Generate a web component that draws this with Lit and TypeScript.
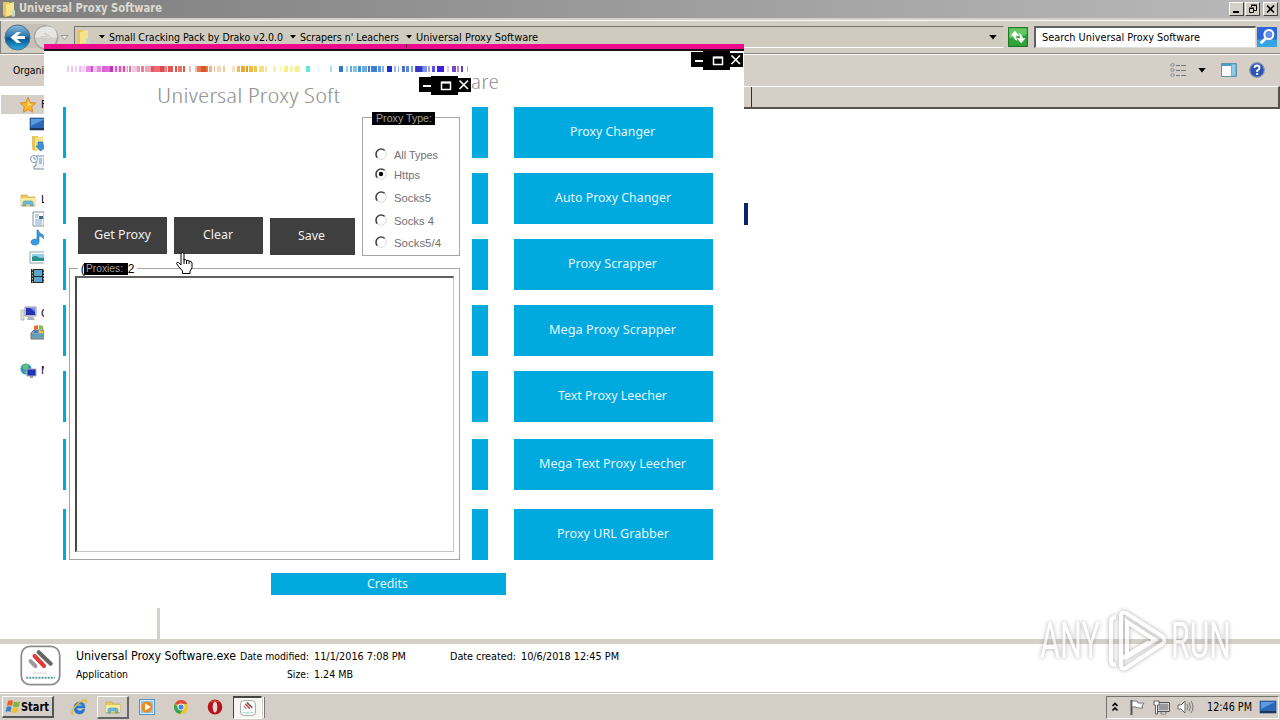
import { LitElement, css, html, svg } from "lit";
import { customElement, property } from "lit/decorators.js";

// Start, width, colour of every stripe in the rainbow strip.
const STRIPES: [number, number, string][] = [
  [1, 2, "#f3c8f5"], [5, 2, "#ecc3ef"], [9, 2, "#f3cdf5"], [13, 2, "#e9b5ee"],
  [15, 4, "#f6d4f7"], [20, 5, "#ec8ae8"], [25, 2, "#b95bc9"], [27, 4, "#f3c0f0"],
  [31, 4, "#e28add"], [36, 3, "#dd5fd0"], [39, 5, "#e26ad8"], [44, 3, "#b33db0"],
  [47, 2, "#f6d0ee"], [49, 2, "#d765bd"], [51, 2, "#f6d0ea"], [53, 2, "#cf5cae"],
  [55, 2, "#f4c8e4"], [57, 2, "#d3519f"], [59, 2, "#f8d8ec"], [61, 1, "#e59bc6"],
  [63, 2, "#cf77a8"], [66, 5, "#f8c6df"], [71, 3, "#ee98ba"], [75, 3, "#e87c9e"],
  [79, 6, "#f3a3b3"], [85, 3, "#dc5868"], [88, 6, "#f06a72"], [94, 4, "#d84b53"],
  [98, 3, "#ef7f80"], [102, 5, "#e55555"], [109, 2, "#da574f"], [112, 4, "#ea7468"],
  [117, 2, "#c9604c"], [123, 2, "#f0b9ba"], [129, 2, "#eec0ac"], [131, 4, "#e97850"],
  [135, 5, "#d9552c"], [140, 2, "#ef7a42"], [143, 3, "#efb28c"], [148, 1, "#eec49c"],
  [151, 4, "#f8d8b4"], [157, 2, "#efcb9e"], [166, 3, "#fae3b4"], [171, 3, "#e9bd5c"],
  [175, 4, "#e8aa30"], [180, 2, "#d9a230"], [183, 4, "#efba3a"], [188, 3, "#e9c850"],
  [193, 5, "#f6df80"], [199, 2, "#f8e89c"], [207, 3, "#faf3ae"], [214, 2, "#fbf7bd"],
  [218, 4, "#f5f08a"], [224, 3, "#faf6a0"], [229, 5, "#f6f28a"], [240, 4, "#60e9e0"],
  [252, 1, "#d2f2f8"], [264, 2, "#a5ddf4"], [273, 4, "#2e78c4"], [280, 2, "#a4d2f2"],
  [284, 2, "#62aee2"], [287, 4, "#83c0ea"], [292, 3, "#4692d4"], [296, 5, "#6cace4"],
  [302, 2, "#3a78c8"], [305, 6, "#3f7ed8"], [312, 3, "#5a94e4"], [316, 2, "#88b0ec"],
  [321, 5, "#1b2ed0"], [328, 2, "#a2bcf2"], [332, 1, "#93b0ee"], [336, 3, "#4a72c0"],
  [340, 3, "#5a88da"], [345, 2, "#80a2e6"], [349, 3, "#4a4ccc"], [351, 6, "#4a78cc"],
  [362, 2, "#a0a4f0"], [350, 6, "#3a34c8"], [357, 4, "#8c8cf0"], [366, 3, "#5850e6"],
  [371, 7, "#3c22dc"], [381, 2, "#dccaf6"], [386, 4, "#7848c4"], [391, 2, "#b58ae0"],
  [395, 2, "#6a3cb4"], [401, 1, "#c9a4dc"],
];

const ROWS: [number, string, number][] = [
  [15, "Proxy Changer", 85], [15, "Auto Proxy Changer", 116], [15, "Proxy Scrapper", 89],
  [15, "Mega Proxy Scrapper", 127], [17, "Text Proxy Leecher", 109],
  [19, "Mega Text Proxy Leecher", 147], [0, "Proxy URL Grabber", 112],
];

const folder = svg`
  <path d="M2 1h6l1 2v12l-5 1-2-2z" fill="#e6c65c"/>
  <path d="M5 3l8-2v13l-8 1z" fill="#f7e38c"/>
  <path d="M11 9h3v6l-3 1z" fill="#c9d6c0"/>`;
const arrow = svg`<path d="M0 0h6L3 3.5z" fill="#000"/>`;
const explorer = svg`
  <path d="M1 3h6l1 2h7v9H1z" fill="#e8c95c" stroke="#c39d35" stroke-width=".6"/>
  <path d="M1 6h14v7H1z" fill="#fbeb9c"/>
  <path d="M3 14v-3q0-2 2-2h6q2 0 2 2v3h-2.500v-2h-5v2z" fill="#6db8dd" stroke="#4790ba" stroke-width=".6"/>`;

const icons: Record<string, unknown> = {
  folder,
  explorer,
  star: svg`<path d="M8 .5l2.300 5 5.400.6-4 3.700 1.100 5.400L8 12.500l-4.800 2.700 1.100-5.400-4-3.700 5.400-.6z" fill="#ffb52c" stroke="#d97a18" stroke-width=".8"/><path d="M8 3l1.500 4h3L8 9z" fill="#ffe27a"/>`,
  desktop: svg`<rect x="0" y="2" width="16" height="12" fill="#2b68b8" stroke="#244a80" stroke-width=".6"/><path d="M1 3h14L1 10z" fill="#5b9be0"/><path d="M0 12h16v2H0z" fill="#1d3558"/>`,
  downloads: svg`${folder}<path d="M8 7h5v4h3l-5.500 5L6 11h2z" fill="#3d94d8" stroke="#236aa8" stroke-width=".6"/>`,
  recent: svg`<path d="M6 2h10v2h-2v8h2v3H4v-3h2z" fill="#eef3f8" stroke="#7f8d9c"/><circle cx="4" cy="5" r="3.500" fill="#fff" stroke="#8296aa"/><path d="M4 3v2h2M9 5h3M9 7h3M9 9h3" stroke="#6b8fb5" fill="none"/>`,
  doc: svg`<path d="M3 1h11v14H3z" fill="#fff" stroke="#8090a4"/><path d="M5 4h4M5 6h3M5 9h7M5 11h7M5 13h7" stroke="#7aa0c8"/><path d="M9 5h4v3H9z" fill="#3e668e"/>`,
  music: svg`<path d="M8 0q1 3 5 5l1 4q-2-3-5-3v6a4 3 0 1 1-2-2.500V0z" fill="#3a9ce0" stroke="#1c6cae" stroke-width=".6"/>`,
  pictures: svg`<path d="M0 3h16v11H0z" fill="#fff" stroke="#8ba0b0"/><path d="M2 5h14v4H2z" fill="#8fd0f0"/><path d="M2 8q4-2 6 0t8 0v4H2z" fill="#2b8d8a"/>`,
  videos: svg`<path d="M1 1h14v14H1z" fill="#222a30"/><path d="M4 2h8v6H4zM4 9h8v5H4z" fill="#59a6d0"/><path d="M2.500 1v15M13.500 1v15" stroke="#d6b06c" stroke-dasharray="1.500 1.500"/>`,
  computer: svg`<path d="M5 1h11v9H5z" fill="#d8dce4" stroke="#8a90a0"/><path d="M6 2h9v7H6z" fill="#2532b4"/><path d="M10 2h5v4z" fill="#6c8af0"/><path d="M8 11h5l2 3H7z" fill="#aab0bc"/><path d="M1 4h3v10H1z" fill="#dce8d8" stroke="#91a091" stroke-width=".6"/>`,
  drive: svg`<path d="M1 8l3-3h9l3 3v6H1z" fill="#8ca0ac" stroke="#5d7280"/><path d="M2 9h13v3H2z" fill="#5e9fb8"/><path d="M4 1l4-1v4l-4 1z" fill="#ee6a30"/><path d="M9 0l4 1v4L9 4z" fill="#87bc3c"/><path d="M4 6l4-1v3H4z" fill="#3f80d0"/><path d="M9 5l4 1v2H9z" fill="#f5c530"/>`,
  network: svg`<circle cx="6" cy="6" r="5.500" fill="#2f8fcc"/><path d="M2 4q4-5 7-2L7 6 4 7zM3 9l3-1 1 3z" fill="#67c26c"/><path d="M7 6h9v7H7z" fill="#1e34b0" stroke="#a8b0bc"/><path d="M10 13h3v2h-3z" fill="#8f98a4"/>`,
  ie: svg`<path d="M14 9H5.500q.5 3 3.500 3 1.500 0 2.500-1.500h2.300Q12.500 15 8.500 15 3 14.500 3 9t5.500-6Q14 3 14 9zM5.500 7h6Q11 5 8.500 5T5.500 7z" fill="#2478cc" stroke="#2478cc" stroke-width=".7" fill-rule="evenodd"/><path d="M3 15q-4 0 0-6Q8 2 14 1q3 0 0 4" fill="none" stroke="#e8b92c" stroke-width="1.300"/>`,
  media: svg`<rect x=".5" y=".5" width="15" height="15" fill="#d9edf9" stroke="#5293c5"/><rect x="2" y="2" width="12" height="12" fill="#8cc1e8"/><circle cx="8" cy="8" r="5.500" fill="#f08a1c"/><path d="M6 4.500L12 8l-6 3.500z" fill="#fff"/>`,
  chrome: svg`<circle cx="8" cy="8" r="7" fill="#f2c522"/><path d="M8 8L2 4.400A7 7 0 0 1 14.300 5H8z" fill="#dd4b3c"/><path d="M2 4.400A7 7 0 0 0 7 15L10.500 10 8 8 5 9z" fill="#38a252"/><circle cx="8" cy="8" r="3.400" fill="#fff"/><circle cx="8" cy="8" r="2.600" fill="#4284e0"/>`,
  opera: svg`<ellipse cx="8" cy="8" rx="7.300" ry="7.500" fill="#b8131a"/><path d="M3 3q5-3 9 0" stroke="#e0504a" fill="none"/><ellipse cx="8" cy="8" rx="2.300" ry="5.500" fill="#e4d8d2"/>`,
  app: svg`<rect x=".5" y=".5" width="15" height="15" rx="3.500" fill="#fff" stroke="#8d8d8d" stroke-width=".7"/><path d="M7.300 2.800l4.700 4.500" stroke="#666" stroke-width="1.600" stroke-linecap="round"/><path d="M5.700 4.300l3.700 3.900" stroke="#e13a38" stroke-width="1.600" stroke-linecap="round"/><path d="M4.100 6.300l1.900 1.900" stroke="#9b9b9b" stroke-width="1.600" stroke-linecap="round"/><path d="M5.500 11h5" stroke="#ccc" stroke-width=".5" stroke-dasharray=".7 .4"/><path d="M2.400 12.800h11.200" stroke="#5d9f9c" stroke-width=".8" stroke-dasharray=".8 .4"/>`,
  start: svg`<path d="M3 2q3-1.500 5 0L7 7Q4.500 5.500 2 7z" fill="#e8602c"/><path d="M9 2.500q3 1.500 6 0L14 7.500q-3 1.500-6 0z" fill="#7cb840"/><path d="M1.600 8q2.500-1.500 5 0L5.500 13q-2.500-1.500-5 0z" fill="#3b82cc"/><path d="M7.600 8.500q3 1.500 6 0L12.500 13q-3 1.500-6 0z" fill="#f4bd2c"/>`,
  refresh: svg`<rect x=".5" y=".5" width="15" height="15" fill="#2fa53a" stroke="#1d7b2a"/><path d="M1 1h14v5L1 9z" fill="#63c864"/><path d="M7.500 11Q4.500 10 4.200 7H2l3.500-4L9 7H6.500q0 2 1 4zM8.500 5q3 1 3.300 4H14l-3.500 4L7 9h2.500q0-2-1-4z" fill="#fff"/>`,
  search: svg`<path d="M0 0h16v16H0z" fill="#2c66d8"/><path d="M0 10h16v6H0z" fill="#36a4e6"/><circle cx="9.500" cy="6" r="3.600" fill="#5c90ec" stroke="#fff" stroke-width="1.600"/><path d="M7 9l-4 4" stroke="#fff" stroke-width="2.200"/>`,
  list: svg`<path d="M1 2h3v2H1zM1 7h3v2H1zM1 12h3v2H1z" fill="#fff" stroke="#6c7784" stroke-width=".8"/><path d="M6 3.500h4M11 3.500h5M6 8.500h4M11 8.500h5M6 13.500h4M11 13.500h5" stroke="#70777e"/>`,
  pane: svg`<path d="M.5 1.500h15v13H.5z" fill="#fff" stroke="#5e95ad"/><path d="M1 2h9v2H1z" fill="#4d9cc3"/><path d="M10.500 2h4v12h-4z" fill="#8fcde6" stroke="#5e95ad" stroke-width=".7"/>`,
  help: svg`<circle cx="8" cy="8" r="7.300" fill="#2d55b8" stroke="#8895ac" stroke-width="1.200"/><path d="M5.500 6Q5.500 3.500 8 3.500T10.500 6Q10.500 7.500 8.200 8.500V10" fill="none" stroke="#fff" stroke-width="1.900"/><path d="M7.200 11h2v2h-2z" fill="#fff"/>`,
  chevrons: svg`<path d="M5.500 7L8 4.500 10.500 7M5.500 11.500L8 9l2.500 2.500" fill="none" stroke="#000" stroke-width="1.600"/>`,
  flag: svg`<path d="M2.500 1v15" stroke="#555" stroke-width="2"/><path d="M3 2h5l1 2h6l-2 3 1 2H8L7 8H3z" fill="#fff" stroke="#777"/>`,
  lan: svg`<path d="M5 4h11v8H5z" fill="#999" stroke="#fff"/><path d="M4.500 3.500h12v9h-12z" fill="none" stroke="#555"/><path d="M8 13h5v2H8z" fill="#fff" stroke="#555" stroke-width=".7"/><path d="M1 2h5v4H4.500v9h-2V6H1z" fill="#fff" stroke="#444" stroke-width=".8"/>`,
  speaker: svg`<path d="M1 6h3l4-4v12l-4-4H1z" fill="#fff" stroke="#666"/><path d="M10 5q2 3 0 6M12 3.500q3 4.500 0 9M14 2q4 6 0 12" fill="none" stroke="#777"/>`,
};

@customElement("ui-icon")
export class UiIcon extends LitElement {
  @property({ type: String })
  name = "";

  render() {
    return html`<svg viewBox="0 0 16 16">${icons[this.name]}</svg>`;
  }

  static styles = css`
    :host {
      display: block;
      flex: none;
      width: 16px;
      height: 16px;
    }

    svg {
      display: block;
      width: 100%;
      height: 100%;
      overflow: visible;
    }
  `;
}

@customElement("fit-text")
export class FitText extends LitElement {
  @property({ type: String })
  text = "";

  @property({ type: Number })
  width = 0;

  @property({ type: Number })
  size = 11;

  render() {
    return html`<svg width=${this.width} height=${this.size}>
      <text y=${Math.round(this.size * 0.9) - 1} font-size=${this.size} textLength=${this.width} lengthAdjust="spacingAndGlyphs">${this.text}</text>
    </svg>`;
  }

  static styles = css`
    :host {
      display: block;
      flex: none;
    }

    svg {
      display: block;
      overflow: visible;
      fill: currentColor;
    }
  `;
}

@customElement("window-controls")
export class WindowControls extends LitElement {
  render() {
    return html`<svg width="52" height="20" viewBox="0 0 52 20">
      <path d="M0 1h12V0h27v2h13v14H39v3H12v-3H0z" fill="#000" />
      <path d="M4 10h8" stroke="#fff" stroke-width="2" />
      <path d="M22.500 6.500h9v7h-9z" fill="none" stroke="#fff" stroke-width="1.500" />
      <path d="M22 6.500h10" stroke="#fff" stroke-width="2" />
      <path d="M40.500 4.500l8.500 8.500M49 4.500l-8.500 8.500" stroke="#fff" stroke-width="1.600" />
    </svg>`;
  }

  static styles = css`
    :host,
    svg {
      display: block;
    }
  `;
}

@customElement("explorer-window")
export class ExplorerWindow extends LitElement {
  places: [string, string][] = [
    ["star", "F"], ["desktop", ""], ["downloads", ""], ["recent", ""], ["", ""],
    ["explorer", "L"], ["doc", ""], ["music", ""], ["pictures", ""], ["videos", ""], ["", ""],
    ["computer", "C"], ["drive", ""], ["", ""], ["network", "N"],
  ];

  crumb(text: string, width: number) {
    return html`<svg class="arrow" viewBox="0 0 6 4">${arrow}</svg>
      <fit-text .text=${text} .width=${width}></fit-text>`;
  }

  render() {
    return html`
      <div class="title">
        <ui-icon name="folder"></ui-icon>
        <fit-text class="bold" text="Universal Proxy Software" width="143" size="11.500"></fit-text>
        <div class="buttons">
          <div class="btn"><svg viewBox="0 0 13 12"><path d="M3 9h6" stroke="#000" stroke-width="2" /></svg></div>
          <div class="btn"><svg viewBox="0 0 13 12"><path d="M5.500 4V2.500h5v5H8M3.500 5.500h4v4h-4zM3 5h5M5 2h6" fill="none" stroke="#000" /></svg></div>
          <div class="btn last"><svg viewBox="0 0 13 12"><path d="M3 2.500l7 7M10 2.500l-7 7" stroke="#000" stroke-width="1.700" /></svg></div>
        </div>
      </div>
      <div class="nav">
        <svg class="travel" width="70" height="32" viewBox="0 0 70 32">
          <defs>
            <linearGradient id="ball" x2="0" y2="1">
              <stop offset="0" stop-color="#8abbdc" />
              <stop offset=".48" stop-color="#2673ad" />
              <stop offset=".52" stop-color="#074f91" />
              <stop offset="1" stop-color="#2cb2e4" />
            </linearGradient>
          </defs>
          <path d="M17 3h29v24H17z" fill="#c5c1b8" />
          <circle cx="17.500" cy="16.500" r="12.500" fill="url(#ball)" stroke="#536c81" />
          <path d="M25 15h-8l4-4h-4l-6.500 5.500L17 22h4l-4-4h8z" fill="#fff" />
          <circle cx="46" cy="16.500" r="11.500" fill="#d3d1cb" stroke="#a5a39c" stroke-width="1.500" />
          <path d="M35 16.500q0-10 11-11t11 11z" fill="#e8e6e1" />
          <path d="M41 15.500h6l-3-3h2l5 4-5 4h-2l3-3h-6z" fill="#dedcd6" stroke="#c1bfb9" stroke-width=".6" />
          <path d="M61 14.500h7l-3.500 4z" fill="#eee" stroke="#888" stroke-width=".8" />
        </svg>
        <div class="address">
          <ui-icon name="folder"></ui-icon>
          ${this.crumb("Small Cracking Pack by Drako v2.0.0", 174)}
          ${this.crumb("Scrapers n' Leachers", 99)}
          ${this.crumb("Universal Proxy Software", 122)}
          <svg class="arrow drop" viewBox="0 0 6 4">${arrow}</svg>
        </div>
        <ui-icon class="refresh" name="refresh"></ui-icon>
        <div class="search"><fit-text text="Search Universal Proxy Software" width="158"></fit-text></div>
        <ui-icon class="go" name="search"></ui-icon>
      </div>
      <div class="tools">
        <fit-text text="Organi" width="31"></fit-text>
        <ui-icon class="views" name="list"></ui-icon>
        <svg class="arrow big" viewBox="0 0 6 4">${arrow}</svg>
        <ui-icon name="pane"></ui-icon>
        <ui-icon class="help" name="help"></ui-icon>
      </div>
      <div class="main">
        <div class="side">
          ${this.places.map(
            ([icon, letter], i) => html`<div class="place ${i === 0 ? "on" : ""} ${letter ? "" : "sub"}">
              ${icon ? html`<ui-icon name=${icon}></ui-icon>` : ""}<span>${letter}</span>
            </div>`
          )}
        </div>
        <div class="files">
          <div class="header"><div class="column"></div></div>
          <div class="selection"></div>
        </div>
      </div>
      <div class="details">
        <ui-icon name="app"></ui-icon>
        <div class="facts">
          <div class="line">
            <fit-text text="Universal Proxy Software.exe" width="160" size="12"></fit-text>
            <fit-text class="key" text="Date modified:" width="69"></fit-text>
            <fit-text text="11/1/2016 7:08 PM" width="92"></fit-text>
            <fit-text class="created" text="Date created:" width="66"></fit-text>
            <fit-text text="10/6/2018 12:45 PM" width="98"></fit-text>
          </div>
          <div class="line">
            <fit-text text="Application" width="52"></fit-text>
            <fit-text class="size" text="Size:" width="22"></fit-text>
            <fit-text text="1.24 MB" width="39"></fit-text>
          </div>
        </div>
      </div>
    `;
  }

  static styles = css`
    :host {
      display: flex;
      flex-direction: column;
      height: 693px;
      background: #fff;
    }

    .title {
      display: flex;
      align-items: center;
      height: 18px;
      gap: 2px;
      padding: 0 2px 0 1px;
      color: #dedbd3;
      background: linear-gradient(90deg, #7e7e7e, #b9b9b9);
    }

    .bold {
      font-weight: bold;
    }

    .buttons {
      display: flex;
      margin-left: auto;
    }

    .btn {
      width: 13px;
      height: 12px;
      border: 1px solid #fff;
      border-right-color: #404040;
      border-bottom-color: #404040;
      background: #d4d0c8;
      margin-left: 1px;
    }

    .btn svg {
      display: block;
    }

    .last {
      margin-left: 3px;
    }

    .nav {
      display: flex;
      align-items: center;
      box-sizing: border-box;
      height: 37px;
      padding-right: 2px;
      background: #d2cec4;
      border-top: 2px solid #d4d0c8;
      border-bottom: 1px solid #fff;
      box-shadow: inset 0 1px #f8f8f8, inset 0 -1px #8a867e, inset 1px 0 #808080;
    }

    .travel {
      margin-right: 4px;
    }

    .address {
      display: flex;
      align-items: center;
      box-sizing: border-box;
      width: 930px;
      height: 22px;
      background: #cfccbf;
      border: 1px solid #77746c;
      border-right-color: #d4d0c8;
      border-bottom-color: #fff;
    }

    .address ui-icon {
      margin-right: 6px;
    }

    .arrow {
      width: 6px;
      height: 4px;
      margin: 0 4px 0 7px;
    }

    .address .arrow:first-of-type {
      margin-left: 2px;
    }

    .address .drop {
      width: 8px;
      height: 5px;
      margin: 0 6px 0 auto;
    }

    .refresh,
    .go {
      width: 20px;
      height: 20px;
    }

    .refresh {
      margin: 0 6px 0 4px;
    }

    .search {
      display: flex;
      align-items: center;
      box-sizing: border-box;
      width: 222px;
      height: 22px;
      padding-left: 6px;
      background: #fff;
      border: 2px solid #606060;
      border-right: 1px solid #ddd;
      border-bottom: 1px solid #ddd;
      margin-right: 1px;
    }

    .tools {
      display: flex;
      align-items: center;
      height: 31px;
      padding: 0 15px 0 13px;
      background: #d5cfc7;
    }

    .views {
      margin-left: auto;
    }

    .tools ui-icon {
      margin-top: -1px;
    }

    .arrow.big {
      width: 8px;
      height: 5px;
      margin: 0 15px 0 12px;
    }

    .help {
      margin-left: 12px;
    }

    .main {
      display: flex;
      flex: 1;
      min-height: 0;
    }

    .side {
      box-sizing: border-box;
      width: 160px;
      padding-top: 9px;
      border-right: 3px solid #d4d0c8;
    }

    .place {
      display: flex;
      align-items: center;
      box-sizing: border-box;
      height: 19px;
      padding-left: 19px;
      gap: 5px;
      margin-left: 1px;
      font-size: 11px;
    }

    .on {
      background: #d4d0c8;
    }

    .sub {
      padding-left: 29px;
    }

    .files {
      flex: 1;
    }

    .header {
      box-sizing: border-box;
      height: 23px;
      background: #d5cfc7;
      border: 1px solid #fff;
      border-bottom: 2px solid #55524d;
      border-right: 2px solid #55524d;
    }

    .column {
      box-sizing: border-box;
      width: 591px;
      height: 100%;
      border-right: 1px solid #303030;
    }

    .selection {
      width: 588px;
      height: 22px;
      margin-top: 94px;
      background: #0a246a;
    }

    .details {
      display: flex;
      box-sizing: border-box;
      height: 54px;
      padding-left: 20px;
      border-top: 5px solid #d4d0c8;
      border-bottom: 1px solid #c4c0b8;
    }

    .details ui-icon {
      width: 41px;
      height: 41px;
      margin-top: 1px;
    }

    .facts {
      display: flex;
      flex-direction: column;
      gap: 6px;
      padding: 6px 0 0 15px;
    }

    .line {
      display: flex;
      align-items: center;
      height: 12px;
      gap: 5px;
    }

    .key {
      margin-left: -1px;
    }

    .created {
      margin-left: 39px;
    }

    .size {
      margin-left: 154px;
    }
  `;
}

@customElement("software-window")
export class SoftwareWindow extends LitElement {
  render() {
    return html`
      <div class="accent"><div class="tick"></div></div>
      <window-controls></window-controls>
      <fit-text class="heading" text="are" width="28" size="21"></fit-text>
      <div class="grid">
        ${ROWS.map(
          ([gap, text, width]) => html`<div class="row" style="margin-bottom: ${gap}px">
            <div class="tile"></div>
            <div class="tile"></div>
            <div class="tile"><fit-text .text=${text} .width=${width} .size=${13}></fit-text></div>
          </div>`
        )}
      </div>
      <div class="credits"><fit-text text="Credits" width="41" size="13"></fit-text></div>
    `;
  }

  static styles = css`
    :host {
      display: flex;
      flex-direction: column;
      background: #fff;
      font-family: "Noto Sans", sans-serif;
    }

    .accent {
      box-sizing: border-box;
      height: 7px;
      background: #ec0b8c;
      border-bottom: 2px solid #1c1016;
    }

    .tick {
      width: 1px;
      height: 4px;
      margin-left: 362px;
      background: #6a0a44;
    }

    window-controls {
      align-self: flex-end;
      margin-right: 1px;
    }

    .heading {
      margin: 0 0 0 427px;
      color: #959595;
      font-family: "Open Sans", sans-serif;
      font-weight: 300;
    }

    .grid {
      margin: 15px 0 0 19px;
    }

    .row {
      display: grid;
      grid-template-columns: 199px 199px 199px;
      column-gap: 26.500px;
    }

    .tile {
      display: flex;
      align-items: center;
      justify-content: center;
      box-sizing: border-box;
      height: 51px;
      padding: 0 2px 3px 0;
      color: #e4f7ff;
      background: #00a9de;
    }

    .credits {
      display: flex;
      align-items: center;
      justify-content: center;
      box-sizing: border-box;
      width: 235px;
      height: 22px;
      margin: 13px 0 0 227px;
      padding: 0 2px 2px 0;
      color: #e4f7ff;
      background: #00a9de;
    }
  `;
}

@customElement("proxy-window")
export class ProxyWindow extends LitElement {
  types: [string, number, number][] = [
    ["All Types", 44, 20], ["Https", 26, 20], ["Socks5", 37, 26], ["Socks 4", 40, 20], ["Socks5/4", 47, 24],
  ];

  render() {
    return html`
      <svg class="rainbow" width="406" height="6">
        ${STRIPES.map(([x, w, c]) => svg`<rect x=${x} width=${w} height="6" fill=${c} />`)}
      </svg>
      <div class="top">
        <fit-text text="Universal Proxy Soft" width="183" size="21"></fit-text>
        <window-controls></window-controls>
      </div>
      <div class="middle">
        <div class="actions">
          <div class="action"><fit-text text="Get Proxy" width="57" size="13"></fit-text></div>
          <div class="action"><fit-text text="Clear" width="30" size="13"></fit-text></div>
          <div class="action save"><fit-text text="Save" width="27" size="13"></fit-text></div>
        </div>
        <div class="types">
          <div class="legend"><fit-text text="Proxy Type:" width="56"></fit-text></div>
          ${this.types.map(
            ([text, width, height]) => html`<div class="type" style="height: ${height}px">
              <svg width="12" height="12" viewBox="0 0 12 12">
                <path d="M2.500 9.800A5 5 0 1 1 9.800 2.500" fill="none" stroke="#444" stroke-width="1.600" />
                <path d="M2.500 9.800A5 5 0 0 0 9.800 2.500" fill="none" stroke="#d8d8d8" />
                ${text === "Https" ? svg`<circle cx="6" cy="6" r="2.200" />` : ""}
              </svg>
              <fit-text .text=${text} .width=${width}></fit-text>
            </div>`
          )}
        </div>
      </div>
      <div class="output">
        <div class="caption">
          <span>(</span>
          <div class="badge"><fit-text text="Proxies:" width="37" size="11"></fit-text></div>
          <span>2</span>
        </div>
        <div class="box"></div>
      </div>
    `;
  }

  static styles = css`
    :host {
      display: flex;
      flex-direction: column;
      background: #fff;
      font-family: "Liberation Sans", sans-serif;
    }

    .rainbow {
      display: block;
    }

    .top {
      display: flex;
      justify-content: space-between;
      height: 45px;
      padding: 13px 1px 0 91px;
      box-sizing: border-box;
      color: #959595;
      font-family: "Open Sans", sans-serif;
      font-weight: 300;
    }

    window-controls {
      margin-top: -9px;
    }

    .middle {
      display: flex;
      padding-left: 12px;
      gap: 7px;
    }

    .actions {
      display: flex;
      align-items: flex-start;
      gap: 7px;
      padding-top: 100px;
      color: #f0f0f0;
      font-family: "Noto Sans", sans-serif;
    }

    .action {
      display: flex;
      align-items: center;
      justify-content: center;
      box-sizing: border-box;
      width: 89px;
      height: 37px;
      padding: 0 1px 2px 0;
      background: #3f3f3f;
    }

    .save {
      width: 85px;
      margin-top: 1px;
      padding-right: 3px;
    }

    .types {
      box-sizing: border-box;
      width: 98px;
      height: 139px;
      padding-left: 12px;
      border: 1px solid #a5a5a5;
      color: #707070;
    }

    .legend {
      display: flex;
      align-items: center;
      justify-content: center;
      width: 63px;
      height: 13px;
      margin: -6px 0 19px -3px;
      color: #a0a0a0;
      background: #000;
    }

    .type {
      display: flex;
      align-items: center;
      gap: 7px;
    }

    .type fit-text {
      margin-top: 3px;
    }

    .output {
      display: flex;
      flex-direction: column;
      box-sizing: border-box;
      width: 391px;
      height: 292px;
      margin: 12px 0 0 3px;
      padding: 0 5px 7px;
      border: 1px solid #a5a5a5;
    }

    .caption {
      display: flex;
      align-items: center;
      justify-content: center;
      width: 59px;
      height: 12px;
      margin: -6px 0 1px 3px;
      background: #fff;
      font-size: 12px;
      line-height: 14px;
    }

    .badge {
      display: flex;
      align-items: center;
      justify-content: center;
      box-sizing: border-box;
      width: 44px;
      height: 12px;
      padding: 0 3px 1px 0;
      margin-left: -1px;
      color: #a0a0a0;
      background: #000;
    }

    .box {
      flex: 1;
      border: 2px solid #4a4a4a;
      border-top-color: #606060;
      border-right: 1px solid #c4c4c4;
      border-bottom: 1px solid #c4c4c4;
    }
  `;
}

@customElement("task-bar")
export class TaskBar extends LitElement {
  render() {
    return html`
      <div class="start">
        <ui-icon name="start"></ui-icon>
        <fit-text text="Start" width="28" size="12"></fit-text>
      </div>
      <div class="slot first"><ui-icon name="ie"></ui-icon></div>
      <div class="slot raised"><ui-icon name="explorer"></ui-icon></div>
      <div class="slot"><ui-icon name="media"></ui-icon></div>
      <div class="slot"><ui-icon name="chrome"></ui-icon></div>
      <div class="slot"><ui-icon name="opera"></ui-icon></div>
      <div class="slot pressed"><ui-icon name="app"></ui-icon></div>
      <div class="edge"></div>
      <div class="tray">
        <ui-icon name="chevrons"></ui-icon>
        <ui-icon class="flag" name="flag"></ui-icon>
        <ui-icon name="lan"></ui-icon>
        <ui-icon name="speaker"></ui-icon>
        <fit-text text="12:46 PM" width="45" size="11.500"></fit-text>
        <ui-icon name="desktop"></ui-icon>
      </div>
    `;
  }

  static styles = css`
    :host {
      display: flex;
      align-items: center;
      box-sizing: border-box;
      height: 27px;
      padding-left: 2px;
      background: #d5cec6;
      border-top: 1px solid #fff;
    }

    .start {
      display: flex;
      align-items: center;
      box-sizing: border-box;
      width: 52px;
      height: 22px;
      gap: 0;
      padding-left: 2px;
      border: 1px solid #fff;
      border-right: 2px solid #555;
      border-bottom: 2px solid #555;
      font-weight: bold;
    }

    .slot {
      display: flex;
      align-items: center;
      justify-content: center;
      box-sizing: border-box;
      width: 32px;
      height: 23px;
      margin-left: 2px;
    }

    .first {
      margin-left: 9px;
    }

    .raised {
      border: 1px solid #fff;
      border-right: 2px solid #666;
      border-bottom: 2px solid #666;
    }

    .pressed {
      width: 29px;
      background: #f6f5f2;
      border: 1px solid #444;
      border-top-width: 2px;
      border-bottom-color: #fff;
      border-right-color: #fff;
    }

    .edge {
      width: 1px;
      height: 21px;
      margin-left: 1px;
      border-left: 1px solid #fff;
      background: #777;
    }

    .tray {
      display: flex;
      align-items: center;
      box-sizing: border-box;
      width: 173px;
      height: 23px;
      margin: 0 1px 0 auto;
      border: 1px solid #77736c;
      border-right-color: #fff;
      border-bottom-color: #fff;
      gap: 8px;
    }

    .flag {
      margin-left: -2px;
    }

    .tray fit-text {
      margin: 1px 0 0 6px;
    }
  `;
}

@customElement("app-root")
export class AppRoot extends LitElement {
  render() {
    return html`
      <explorer-window></explorer-window>
      <task-bar></task-bar>
      <software-window></software-window>
      <proxy-window></proxy-window>
      <svg class="cursor" width="17" height="23" viewBox="0 0 17 23">
        <path d="M5 13V2q0-1.500 1.500-1.500T8 2v6q1.500-1 2.500.5 1.700-.8 2.500.7 2.500-.7 3 1.800v5l-2 3v2.500H6.500V19l-4-4.500-2-3q0-1.500 2-1z" fill="#fff" stroke="#000" />
        <path d="M8 7v5M10.500 8.500V12M13 9.500V12" stroke="#000" />
      </svg>
      <svg class="mark" width="210" height="70" viewBox="0 0 210 70">
        <text x="4" y="50" textLength="60" lengthAdjust="spacingAndGlyphs">ANY</text>
        <text x="135" y="50" textLength="60" lengthAdjust="spacingAndGlyphs">RUN</text>
        <path d="M80 9q-5 0-5 5v38q0 5 5 5M85 50V8q0-5 5-3l36 23q5 5 0 8L90 60q-5 2-5-3v-6l28-17" />
        <path d="M91 14l28 18-28 17z" />
      </svg>
    `;
  }

  static styles = css`
    :host {
      display: block;
      position: relative;
      width: 1280px;
      height: 720px;
      overflow: hidden;
      color: #000;
      font-family: "DejaVu Sans Condensed", "DejaVu Sans", sans-serif;
      font-stretch: condensed;
    }

    software-window {
      position: absolute;
      left: 44px;
      top: 44px;
      width: 700px;
      height: 564px;
    }

    proxy-window {
      position: absolute;
      left: 66px;
      top: 66px;
      width: 406px;
      height: 500px;
    }

    .cursor {
      position: absolute;
      left: 176px;
      top: 252px;
    }

    .mark {
      position: absolute;
      left: 1036px;
      top: 608px;
      overflow: visible;
      filter: drop-shadow(0 0 2px #888);
      opacity: 0.7;
    }

    .mark text {
      fill: #fff;
      font: 400 50px Roboto, sans-serif;
    }

    .mark path {
      fill: none;
      stroke: #fff;
      stroke-width: 4;
    }
  `;
}
